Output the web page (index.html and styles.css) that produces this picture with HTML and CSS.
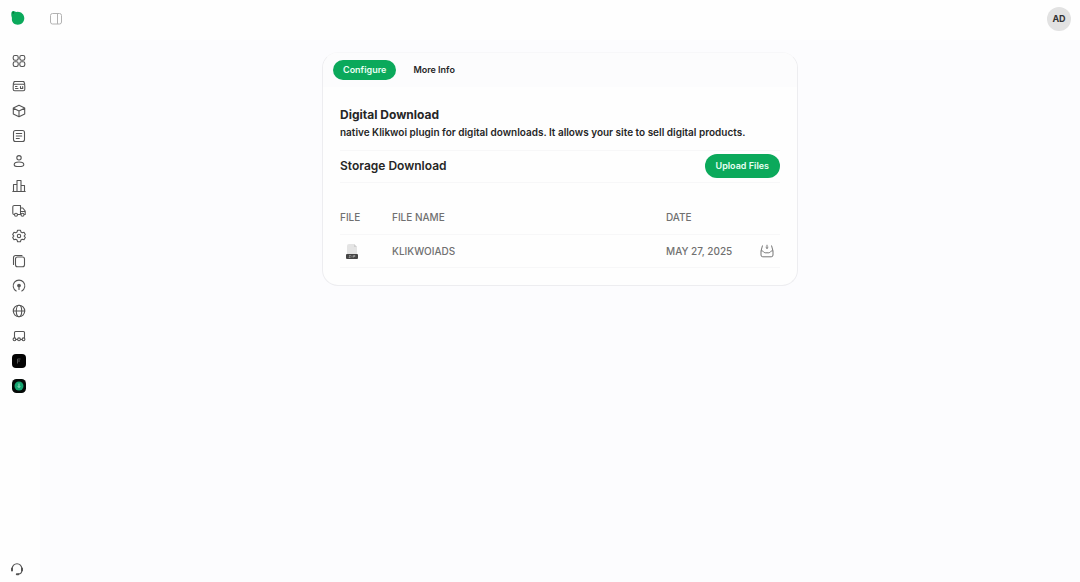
FILE: index.html
```html
<!DOCTYPE html>
<html lang="en">
<head>
  <meta charset="UTF-8">
  <meta name="viewport" content="width=device-width, initial-scale=1.0">
  <title>Digital Download</title>
  <link rel="stylesheet" href="styles.css">
</head>
<body>
  <div class="app">
    <aside class="sidebar">
      <a class="logo" href="#" aria-label="Home">
        <svg width="16" height="16" viewBox="0 0 16 16">
          <path d="M2.500 1.200C4 .8 5 2 7 1.900c4-.4 7.300 2.600 7.300 6.400 0 3.700-3 6.500-6.500 6.500-3.800 0-6.300-2.600-5.900-6.200C2.100 7 1.200 6.400 1.300 4.500c0-1.500.2-3 1.200-3.300z" fill="#0ba95b"/>
          <circle cx="3.200" cy="2.800" r="1" fill="#067a40"/>
        </svg>
      </a>
      <nav class="nav">
        <a href="#" aria-label="Dashboard"><svg class="icon" viewBox="0 0 14 14"><rect x="1.200" y="1.500" width="5" height="4.700" rx="1.700"/><rect x="7.800" y="1.500" width="5" height="4.700" rx="1.700"/><rect x="1.200" y="7.800" width="5" height="4.700" rx="1.700"/><rect x="7.800" y="7.800" width="5" height="4.700" rx="1.700"/></svg></a>
        <a href="#" aria-label="Point of sale"><svg class="icon" viewBox="0 0 14 14"><path d="M1.200 5.200l1-2.700h9.600l1 2.700"/><rect x="1.200" y="5.200" width="11.600" height="6.500" rx="1.500"/><path d="M3.500 7.500h1.500M3.500 9.500h2.500M8.500 7.500v2h2.200v-2"/></svg></a>
        <a href="#" aria-label="Products"><svg class="icon" viewBox="0 0 14 14"><path d="M7 1.200l5.700 2.900v5.800L7 12.800 1.300 9.900V4.100zM1.500 4.300L7 7l5.500-2.700M7 7v5.700"/></svg></a>
        <a href="#" aria-label="Orders"><svg class="icon" viewBox="0 0 14 14"><rect x="1.500" y="1.500" width="11" height="11" rx="2"/><path d="M4.300 4.500h5.400M4.300 7h5.400M4.300 9.500h3"/></svg></a>
        <a href="#" aria-label="Customers"><svg class="icon" viewBox="0 0 14 14"><circle cx="7" cy="3.800" r="2.200"/><path d="M7 8c3 0 4.800 1.200 4.800 2.700S10.800 12.500 7 12.500s-4.800-.3-4.800-1.800S4 8 7 8z"/></svg></a>
        <a href="#" aria-label="Analytics"><svg class="icon" viewBox="0 0 14 14"><path d="M1.500 12.500v-7h3.500M5 12.500v-11h4v11M9 6.500h3.500v6M.8 12.500h12.400"/></svg></a>
        <a href="#" aria-label="Shipping"><svg class="icon" viewBox="0 0 14 14"><path d="M2.500 10.500H2A1.200 1.200 0 0 1 .8 9.300V3A1.500 1.500 0 0 1 2.300 1.500H8.500v9M5.500 10.500h3M8.500 4h2.300L13.200 7v3.500h-.7M8.500 7.500h4.500"/><circle cx="4" cy="10.800" r="1.500"/><circle cx="10.500" cy="10.800" r="1.500"/></svg></a>
        <a href="#" aria-label="Settings"><svg class="icon" viewBox="0 0 14 14"><path d="M5.600 1.200h2.800l.5 1.700 1.400.8 1.700-.4 1.300 2.300L12.100 7l1.200 1.400-1.300 2.300-1.700-.4-1.400.8-.5 1.700H5.600l-.5-1.700-1.400-.8-1.700.4L.7 8.400 1.900 7 .7 5.600 2 3.300l1.700.4 1.400-.8z"/><circle cx="7" cy="7" r="1.700"/></svg></a>
        <a href="#" aria-label="Pages"><svg class="icon" viewBox="0 0 14 14"><rect x="3.500" y="3" width="9" height="9.800" rx="2"/><path d="M1.500 10.500V3.500a2 2 0 0 1 2-2H10"/></svg></a>
        <a href="#" aria-label="Marketing"><svg class="icon" viewBox="0 0 14 14"><path d="M4.200 12a5.800 5.800 0 1 1 5.600 0"/><circle cx="7" cy="6.500" r="1.300" fill="#555"/><path d="M7 7v3.500"/></svg></a>
        <a href="#" aria-label="Domains"><svg class="icon" viewBox="0 0 14 14"><circle cx="7" cy="7" r="5.700"/><ellipse cx="7" cy="7" rx="2.700" ry="5.700"/><path d="M1.300 7h11.400"/></svg></a>
        <a href="#" aria-label="Channels"><svg class="icon" viewBox="0 0 14 14"><path d="M2.500 8.500V3.500a1 1 0 0 1 1-1h8a1 1 0 0 1 1 1V8.500M4 10.500h1.500M8.500 10.500H10"/><circle cx="2.500" cy="10.300" r="1.400"/><circle cx="7" cy="10.300" r="1.400"/><circle cx="11.500" cy="10.300" r="1.400"/></svg></a>
        <a href="#" aria-label="Fonts plugin"><svg width="14" height="14" viewBox="0 0 14 14"><rect width="14" height="14" rx="4" fill="#030303"/><path d="M5.500 9.500V5h3M5.500 7h2.500" fill="none" stroke="#555"/></svg></a>
        <a href="#" aria-label="Digital download plugin" aria-current="page"><svg width="14" height="14" viewBox="0 0 14 14"><rect width="14" height="14" rx="4.500" fill="#050a08"/><circle cx="7" cy="7" r="4.500" fill="#16a571"/><path d="M7 4.500v4M5.800 7.300L7 8.500l1.200-1.200" fill="none" stroke="#9be3c5"/></svg></a>
      </nav>
      <a class="support" href="#" aria-label="Support">
        <svg class="icon" viewBox="0 0 14 14"><path d="M2.200 6.500a4.800 4.800 0 0 1 9.600 0M11.800 8.500c0 2-1.500 3.500-3.500 3.500"/><path d="M2 6.500v2M12 6.500v2M6.800 12.200h1.500" stroke-width="2"/></svg>
      </a>
    </aside>

    <div class="page">
      <header class="topbar">
        <button class="toggle" type="button" aria-label="Toggle sidebar">
          <svg width="14" height="14" viewBox="0 0 14 14" fill="none" stroke="#b2b2b2"><rect x="1.500" y="1.500" width="11" height="10.500" rx="2"/><path d="M8.500 1.500v10.500"/></svg>
        </button>
        <button class="avatar" type="button">AD</button>
      </header>

      <main class="content">
        <section class="card">
          <div class="tabs">
            <button class="tab active" type="button">Configure</button>
            <button class="tab" type="button">More Info</button>
          </div>

          <div class="card-body">
            <h1>Digital Download</h1>
            <p>native Klikwoi plugin for digital downloads. It allows your site to sell digital products.</p>

            <div class="storage">
              <h2>Storage Download</h2>
              <button class="upload" type="button">Upload Files</button>
            </div>

            <table class="files">
              <thead>
                <tr>
                  <th class="col-file">File</th>
                  <th>File Name</th>
                  <th class="col-date">Date</th>
                  <th class="col-action"></th>
                </tr>
              </thead>
              <tbody>
                <tr>
                  <td>
                    <svg class="zip" width="14" height="18" viewBox="0 0 14 18">
                      <path d="M2 4a2 2 0 0 1 2-2h5l3 3v7H2z" fill="#e4e4e4"/>
                      <path d="M9 2v3h3z" fill="#cfcfcf"/>
                      <rect x="1" y="12" width="12" height="5" rx="1" fill="#454545"/>
                      <path d="M4 13.500h1.500L4 15.500h1.500M7 13.500v2M8.500 15.500v-2H10v1H8.500" fill="none" stroke="#b8b8b8" stroke-width=".6"/>
                    </svg>
                  </td>
                  <td>KlikwoiAds</td>
                  <td>May 27, 2025</td>
                  <td>
                    <button class="download" type="button" aria-label="Download">
                      <svg width="14" height="14" viewBox="0 0 14 14" fill="none" stroke="#777" stroke-linejoin="round"><path d="M2.500 1.500L1 7v4a1.800 1.800 0 0 0 1.800 1.800h8.400A1.800 1.800 0 0 0 13 11V7l-1.500-5.500M1.200 6.800c2.800 0 2.300 2 4 2h3.600c1.700 0 1.200-2 4-2M7 .8v3.700M5.700 3.300L7 4.500l1.300-1.200"/></svg>
                    </button>
                  </td>
                </tr>
              </tbody>
            </table>
          </div>
        </section>
      </main>
    </div>
  </div>
</body>
</html>
```
FILE: styles.css
```css
* {
  margin: 0;
  padding: 0;
  box-sizing: border-box;
}

body {
  font-family: Inter, "Liberation Sans", sans-serif;
  font-size: 9px;
  line-height: 16px;
  color: #262626;
  background: #fcfcfe;
}

button {
  font: inherit;
  color: inherit;
  border: none;
  background: none;
  cursor: pointer;
}

.app {
  display: flex;
  min-height: 100vh;
}

/* sidebar */
.sidebar {
  width: 40px;
  flex-shrink: 0;
  display: flex;
  flex-direction: column;
  background: #fefefe;
}

.logo {
  height: 36px;
  padding: 10px;
}

.nav {
  display: flex;
  flex-direction: column;
  gap: 11px;
  padding: 18px 12px;
}

.nav a,
.logo,
.support {
  display: flex;
}

.icon {
  width: 14px;
  height: 14px;
  fill: none;
  stroke: #555;
  stroke-width: 1.1;
  stroke-linecap: round;
  stroke-linejoin: round;
}

.support {
  margin-top: auto;
  padding: 6px 10px;
}

/* top bar */
.page {
  flex: 1;
}

.topbar {
  height: 40px;
  display: flex;
  align-items: center;
  justify-content: space-between;
  padding: 0 9px 2px;
  background: #fefefe;
}

.toggle {
  display: flex;
}

.avatar {
  width: 24px;
  height: 24px;
  border-radius: 50%;
  background: #e2e2e2;
  color: #333;
  font-weight: 700;
}

.content {
  padding: 12px;
}

/* card */
.card {
  max-width: 476px;
  margin: 0 auto;
  border: 1px solid #ededf0;
  border-top-color: #f7f7f9;
  border-radius: 16px;
  background: #fefefe;
  overflow: hidden;
}

.tabs {
  display: flex;
  gap: 7px;
  padding: 7px 10px;
  background: #fcfcfd;
}

.tab {
  height: 20px;
  padding: 0 10px;
  border-radius: 10px;
  font-weight: 600;
}

.tab.active {
  background: #0ba95b;
  color: #e9fff3;
}

.card-body {
  padding: 19px 17px 17px;
}

h1,
h2 {
  font-size: 12px;
  line-height: 18px;
  font-weight: 600;
}

h1 {
  font-weight: 700;
}

p {
  font-size: 10px;
  font-weight: 600;
}

.storage {
  display: flex;
  align-items: center;
  justify-content: space-between;
  margin: 10px 0 18px;
  padding: 3px 0 4px;
  border-top: 1px solid #f7f7f8;
  border-bottom: 1px solid #f7f7f8;
}

.upload {
  height: 24px;
  padding: 0 11px;
  border-radius: 12px;
  background: #0ba95b;
  color: #e9fff3;
  font-weight: 600;
}

.files {
  width: 100%;
  table-layout: fixed;
  border-collapse: collapse;
  font-size: 10px;
  text-transform: uppercase;
  color: #707070;
}

.files th,
.files td {
  height: 33px;
  border-bottom: 1px solid #f7f7f8;
  text-align: left;
  vertical-align: middle;
  font-weight: 500;
}

.col-file {
  width: 52px;
}

.col-date {
  width: 94px;
}

.col-action {
  width: 20px;
}

.zip {
  display: block;
  margin-left: 5px;
}

.download {
  display: flex;
}
```
